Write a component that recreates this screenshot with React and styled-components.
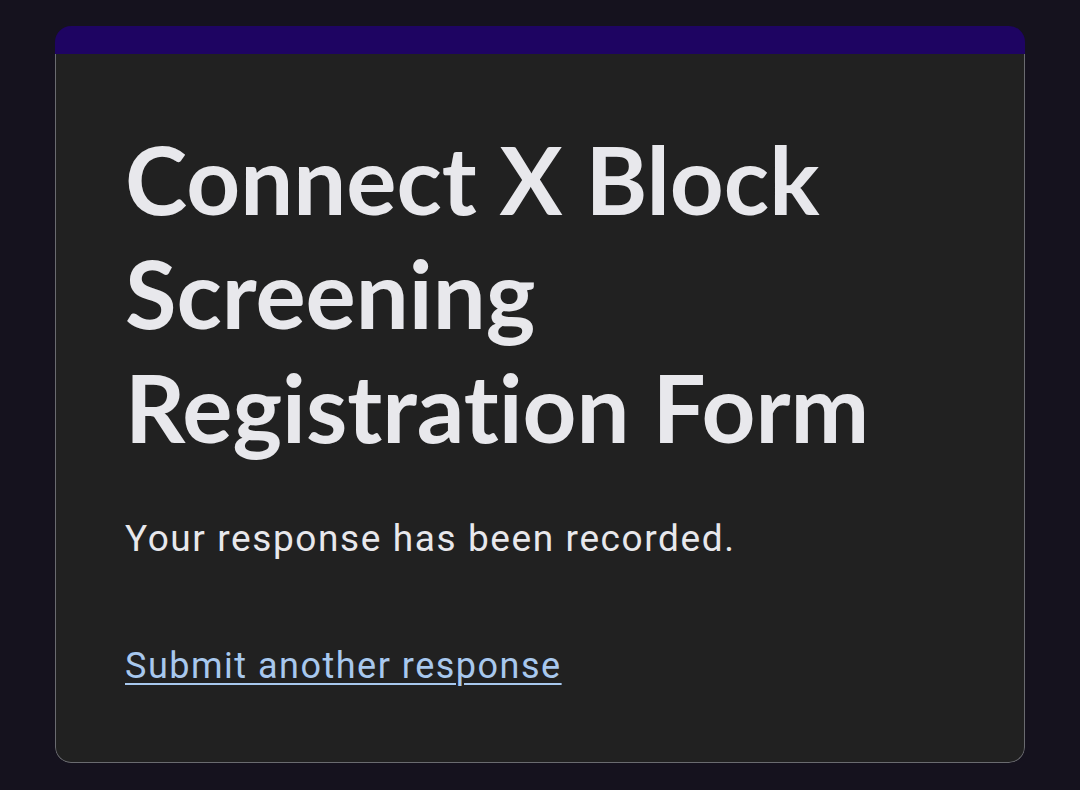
import React from "react";
import styled, { createGlobalStyle } from "styled-components";

const Global = createGlobalStyle`
  html, body { margin: 0; padding: 0; background: #15121e; }
  body { font-family: Roboto, "Liberation Sans", sans-serif; }
`;

const Page = styled.div`
  min-height: 790px;
  box-sizing: border-box;
  padding: 26px 55px 0 55px;
  background: #15121e;
`;

const Card = styled.div`
  display: flex;
  flex-direction: column;
  width: 970px;
  border-radius: 16px;
  overflow: hidden;
`;

const TopBar = styled.div`
  height: 28px;
  background: #1e0462;
`;

const Body = styled.div`
  background: #212121;
  border: 1.5px solid #6a6b70;
  border-top: none;
  border-radius: 0 0 16px 16px;
  padding: 68px 69px 70px 69px;
  height: 709px;
  box-sizing: border-box;
`;

const Title = styled.h1`
  margin: 0;
  font-family: Lato, "Noto Sans", sans-serif;
  font-weight: 700;
  font-size: 94px;
  line-height: 114px;
  font-variant-ligatures: none;
  color: #e8e8ec;
  width: 800px;
`;

const Message = styled.p`
  margin: 51px 0 0 0;
  font-family: Roboto, sans-serif;
  font-size: 37px;
  letter-spacing: 1.6px;
  line-height: 48px;
  color: #e8e8ec;
`;

const Link = styled.a`
  display: inline-block;
  margin-top: 79px;
  font-family: Roboto, sans-serif;
  font-size: 36px;
  letter-spacing: 1.5px;
  line-height: 48px;
  color: #a8c8ee;
  text-decoration: underline;
  text-underline-offset: 5px;
  text-decoration-thickness: 2px;
`;

export default function App() {
  return (
    <>
      <Global />
      <Page>
        <Card>
          <TopBar />
          <Body>
            <Title>Connect X Block Screening Registration Form</Title>
            <Message>Your response has been recorded.</Message>
            <Link href="#">Submit another response</Link>
          </Body>
        </Card>
      </Page>
    </>
  );
}
